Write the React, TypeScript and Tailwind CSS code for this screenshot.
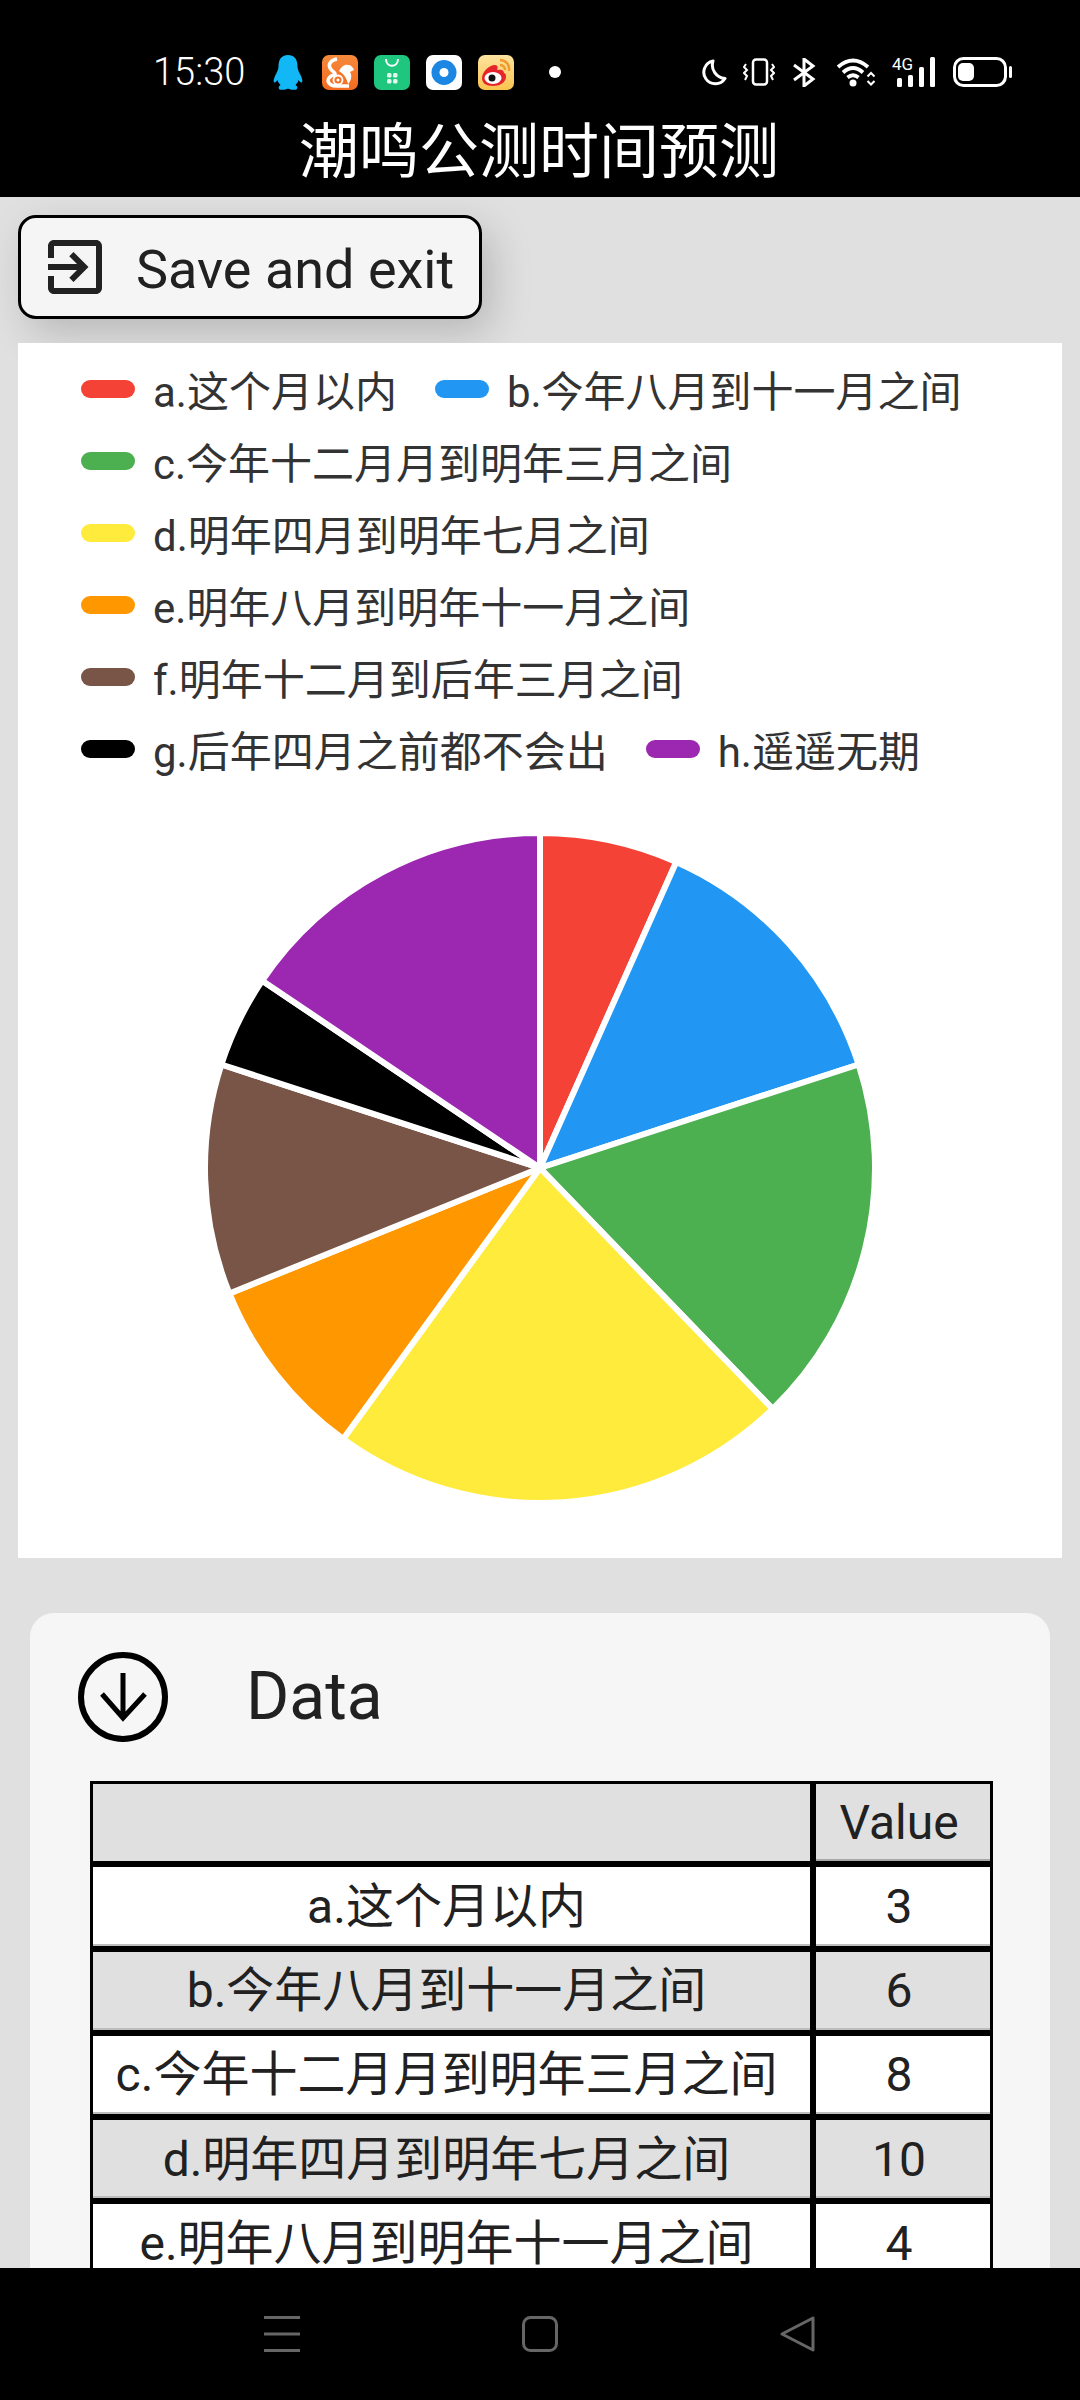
const slices = [
  { label: 'a.这个月以内', value: 3, color: '#f44336', pill: 'bg-[#f44336]' },
  { label: 'b.今年八月到十一月之间', value: 6, color: '#2196f3', pill: 'bg-[#2196f3]' },
  { label: 'c.今年十二月月到明年三月之间', value: 8, color: '#4caf50', pill: 'bg-[#4caf50]' },
  { label: 'd.明年四月到明年七月之间', value: 10, color: '#ffeb3b', pill: 'bg-[#ffeb3b]' },
  { label: 'e.明年八月到明年十一月之间', value: 4, color: '#ff9800', pill: 'bg-[#ff9800]' },
  { label: 'f.明年十二月到后年三月之间', value: 5, color: '#795548', pill: 'bg-[#795548]' },
  { label: 'g.后年四月之前都不会出', value: 2, color: '#000000', pill: 'bg-black' },
  { label: 'h.遥遥无期', value: 7, color: '#9c27b0', pill: 'bg-[#9c27b0]' },
];

const total = slices.reduce((sum, s) => sum + s.value, 0);

function PieChart() {
  const cx = 340;
  const cy = 340;
  const r = 335;
  let acc = 0;
  return (
    <svg width="680" height="680" viewBox="0 0 680 680" className="mx-auto mt-[43px] block">
      {slices.map((s) => {
        const start = (acc / total) * 2 * Math.PI;
        acc += s.value;
        const end = (acc / total) * 2 * Math.PI;
        const x1 = cx + r * Math.sin(start);
        const y1 = cy - r * Math.cos(start);
        const x2 = cx + r * Math.sin(end);
        const y2 = cy - r * Math.cos(end);
        const large = end - start > Math.PI ? 1 : 0;
        return (
          <path
            key={s.label}
            d={`M${cx} ${cy}L${x1} ${y1}A${r} ${r} 0 ${large} 1 ${x2} ${y2}Z`}
            fill={s.color}
            stroke="#fff"
            strokeWidth="6"
            strokeLinejoin="round"
          />
        );
      })}
    </svg>
  );
}

function Legend() {
  const rows = [[0, 1], [2], [3], [4], [5], [6, 7]];
  return (
    <div className="pl-[63px] pt-[10px]">
      {rows.map((row) => (
        <div key={row[0]} className="flex h-[72px] items-center gap-[38px]">
          {row.map((i) => (
            <div key={i} className="flex items-center gap-[18px]">
              <span className={`h-[18px] w-[54px] rounded-full ${slices[i].pill}`} />
              <span className="pt-[8px] text-[42px] leading-none text-[#333333]">{slices[i].label}</span>
            </div>
          ))}
        </div>
      ))}
    </div>
  );
}

function StatusLeft() {
  return (
    <div className="flex items-center">
      <span className="w-[120px] text-[38px] leading-none font-light text-white">15:30</span>
      <svg width="30" height="35" viewBox="0 0 30 35" className="mr-[19px]">
        <path
          d="M15 0C8 0 5.500 5 5.500 11.500C5.500 14 4.500 16 3 19C1 23 0 26 1 27.500C2 28 3.500 26.500 4.500 25C5 27 6 28.500 7.500 30C5.500 31 5 33 6.500 34.500C8 35 12 35 14 34C15 33.500 15 33.500 16 34C18 35 22 35 23.500 34.500C25 33 24.500 31 22.500 30C24 28.500 25 27 25.500 25C26.500 26.500 28 28 29 27.500C30 26 29 23 27 19C25.500 16 24.500 14 24.500 11.500C24.500 5 22 0 15 0Z"
          fill="#12b7f5"
        />
      </svg>
      <svg width="36" height="35" viewBox="0 0 36 35" className="mr-[16px]">
        <defs>
          <linearGradient id="ucBg" x1="0" y1="0" x2="0" y2="1">
            <stop offset="0" stopColor="#f68a3c" />
            <stop offset="1" stopColor="#f46a1f" />
          </linearGradient>
        </defs>
        <rect width="36" height="35" rx="7" fill="url(#ucBg)" />
        <path d="M15 4C9 5 6 9 8 13C10 17 14 17 13 20C9 20 6 23 6 26C7 30 11 31 15 31L27 31" fill="none" stroke="#fff" strokeWidth="3.500" />
        <circle cx="16" cy="25" r="4.500" fill="none" stroke="#fff" strokeWidth="1.800" />
        <circle cx="16" cy="25" r="1.500" fill="#fff" />
        <path d="M17 16C19 12 23 9 26 10C29 10 31 12 32 15L28 17C30 20 30 25 26 29C25 24 22 19 17 16Z" fill="#fff" />
      </svg>
      <svg width="36" height="35" viewBox="0 0 36 35" className="mr-[16px]">
        <rect width="36" height="35" rx="7" fill="#1fc77e" />
        <path d="M12 4C12 13 24 13 24 4" fill="none" stroke="#fff" strokeWidth="2" />
        <rect x="13" y="18" width="4.500" height="4.500" rx="1.500" fill="#e6f8ee" />
        <rect x="19" y="18" width="4.500" height="4.500" rx="1.500" fill="#e6f8ee" />
        <rect x="13" y="24" width="4.500" height="4.500" rx="1.500" fill="#e6f8ee" />
        <rect x="19" y="24" width="4.500" height="4.500" rx="1.500" fill="#e6f8ee" />
      </svg>
      <svg width="36" height="35" viewBox="0 0 36 35" className="mr-[16px]">
        <rect width="36" height="35" rx="7" fill="#ffffff" />
        <circle cx="18" cy="17.500" r="12.500" fill="#1c86e3" />
        <circle cx="18" cy="17.500" r="4.500" fill="#ffffff" />
      </svg>
      <svg width="36" height="35" viewBox="0 0 36 35" className="mr-[35px]">
        <defs>
          <linearGradient id="wbBg" x1="0" y1="0" x2="0" y2="1">
            <stop offset="0" stopColor="#fde3a0" />
            <stop offset="1" stopColor="#fbc44e" />
          </linearGradient>
        </defs>
        <rect width="36" height="35" rx="7" fill="url(#wbBg)" />
        <path d="M22 5C28 5 32 10 31 16M22 10C25 10 27 12 27 15" fill="none" stroke="#f29a2e" strokeWidth="2.500" />
        <path d="M4 23C4 17 11 10 17 10C20 10 20 13 19 15C23 14 26 15 26 18C30 19 29 31 15 31C8 31 4 28 4 23Z" fill="#e6252b" />
        <ellipse cx="15" cy="23" rx="8.500" ry="6" fill="#ffffff" />
        <circle cx="14" cy="23" r="3.500" fill="#111111" />
      </svg>
      <span className="h-[12px] w-[12px] rounded-full bg-white" />
    </div>
  );
}

function StatusRight() {
  return (
    <div className="flex items-center pr-[68px]">
      <svg width="25" height="27" viewBox="0 0 25 27" className="mr-[16px]">
        <path d="M11 2A11.500 11.500 0 1 0 23 19.500A13.500 13.500 0 0 1 11 2Z" fill="none" stroke="#fff" strokeWidth="3" strokeLinejoin="round" />
      </svg>
      <svg width="32" height="28" viewBox="0 0 32 28" className="mr-[18px]">
        <rect x="10" y="1.500" width="14" height="25" rx="3" fill="none" stroke="#fff" strokeWidth="2.500" />
        <path d="M3 6L1 9L4 12L1 15L4 18L2 22M29 6L31 9L28 12L31 15L28 18L30 22" fill="none" stroke="#fff" strokeWidth="2" />
      </svg>
      <svg width="23" height="29" viewBox="0 0 23 29" className="mr-[20px]">
        <path d="M1 7L20 21L11 28V1L20 8L1 22" fill="none" stroke="#fff" strokeWidth="3" />
      </svg>
      <svg width="39" height="30" viewBox="0 0 39 30" className="mr-[17px]">
        <path d="M2 10Q17 -3 32 10M7 15.500Q17 6.500 27 15.500M11.500 20.500Q17 16 22.500 20.500" fill="none" stroke="#fff" strokeWidth="3.800" />
        <circle cx="17" cy="26" r="3.500" fill="#fff" />
        <path d="M31.500 19.500L35 16L38.500 19.500M31.500 24L35 27.500L38.500 24" fill="none" stroke="#fff" strokeWidth="2" />
      </svg>
      <svg width="43" height="30" viewBox="0 0 43 30" className="mr-[18px] overflow-visible">
        <text x="0" y="13" fontSize="17" fontFamily="Roboto" fill="#fff">4G</text>
        <rect x="5" y="21" width="5" height="9" rx="1.500" fill="#fff" />
        <rect x="16" y="18" width="5" height="12" rx="1.500" fill="#fff" />
        <rect x="27" y="10" width="5" height="20" rx="1.500" fill="#fff" />
        <rect x="38" y="0" width="5" height="30" rx="1.500" fill="#fff" />
      </svg>
      <svg width="59" height="30" viewBox="0 0 59 30">
        <rect x="1.500" y="1.500" width="51" height="27" rx="9" fill="none" stroke="#fff" strokeWidth="3" />
        <rect x="5" y="6" width="16" height="18" rx="5" fill="#fff" />
        <rect x="56" y="9" width="3" height="12" rx="1.500" fill="#fff" />
      </svg>
    </div>
  );
}

function DataTable() {
  // only the rows above the nav bar are on screen
  const visible = slices.slice(0, 5);
  return (
    <div className="ml-[60px] mt-[39px] grid w-[903px] grid-cols-[717px_174px] gap-x-[6px] gap-y-[6px] bg-black px-[3px] pt-[3px]">
      <div className="h-[77.25px] bg-[#e0e0e0]" />
      <div className="flex h-[77.25px] items-center justify-center border-b-2 border-[#a8a8a8] bg-[#e0e0e0] pr-[8px] pt-[3px] text-[48px] leading-none text-[#212121]">
        Value
      </div>
      {visible.map((s, i) => {
        const rowBg = i % 2 === 0 ? 'bg-white' : 'bg-[#e0e0e0]';
        return [
          <div
            key={s.label}
            className={`flex h-[78.25px] items-center justify-center border-b-2 border-[#bdbdbd] pr-[10px] pt-[3px] text-[48px] leading-none whitespace-nowrap text-[#212121] ${rowBg}`}
          >
            {s.label}
          </div>,
          <div
            key={s.label + 'v'}
            className={`flex h-[78.25px] items-center justify-center border-b-2 border-[#bdbdbd] pr-[8px] pt-[3px] text-[48px] leading-none text-[#212121] ${rowBg}`}
          >
            {s.value}
          </div>,
        ];
      })}
    </div>
  );
}

export default function App() {
  return (
    <div className="flex h-[2400px] w-[1080px] flex-col overflow-hidden bg-black font-['Roboto','Noto_Sans_CJK_SC',sans-serif]">
      <header className="h-[197px] shrink-0 bg-black">
        <div className="mt-[50px] flex h-[44px] items-center justify-between pl-[153px]">
          <StatusLeft />
          <StatusRight />
        </div>
        <h1 className="mt-[24px] pr-[2px] text-center text-[60px] leading-[70px] font-normal text-white">潮鸣公测时间预测</h1>
      </header>

      <main className="min-h-0 flex-1 overflow-hidden bg-[#e0e0e0]">
        <button className="ml-[18px] mt-[18px] flex h-[104px] w-[464px] items-center rounded-[18px] border-[3px] border-black bg-[#f5f5f5] pl-[18px] shadow-[10px_14px_40px_rgba(0,0,0,0.18)]">
          <svg width="72" height="72" viewBox="0 0 24 24" fill="#212121">
            <path d="M10.090 15.590L11.500 17l5-5-5-5-1.410 1.410L12.670 11H3v2h9.670l-2.580 2.590zM19 3H5c-1.110 0-2 .9-2 2v4h2V5h14v14H5v-4H3v4c0 1.100.89 2 2 2h14c1.100 0 2-.9 2-2V5c0-1.100-.9-2-2-2z" />
          </svg>
          <span className="ml-[25px] pt-[5px] text-[54px] leading-none text-[#212121]">Save and exit</span>
        </button>

        <section className="mx-[18px] mt-[24px] h-[1215px] bg-white">
          <Legend />
          <PieChart />
        </section>

        <section className="mx-[30px] mt-[55px] rounded-[24px] bg-[#f6f6f6] pb-[40px]">
          <div className="flex items-center pl-[48px] pt-[39px]">
            <svg width="90" height="90" viewBox="0 0 90 90">
              <circle cx="45" cy="45" r="42" fill="none" stroke="#000" strokeWidth="6" />
              <path d="M45 21V66M24 42L45 66L67 42" fill="none" stroke="#000" strokeWidth="5" />
            </svg>
            <span className="ml-[78px] text-[66px] leading-none text-[#212121]">Data</span>
          </div>
          <DataTable />
        </section>
      </main>

      <nav className="flex h-[132px] shrink-0 gap-[222px] bg-black pl-[264px] pt-[48px]">
        <svg width="36" height="36" viewBox="0 0 36 36">
          <path d="M0 1.500H36M0 18H36M0 34.500H36" stroke="#666" strokeWidth="3" />
        </svg>
        <svg width="36" height="36" viewBox="0 0 36 36">
          <rect x="1.500" y="1.500" width="33" height="33" rx="7" fill="none" stroke="#666" strokeWidth="3" />
        </svg>
        <svg width="36" height="36" viewBox="0 0 36 36">
          <path d="M33 2V34L2 18Z" fill="none" stroke="#666" strokeWidth="3" strokeLinejoin="round" />
        </svg>
      </nav>
    </div>
  );
}
